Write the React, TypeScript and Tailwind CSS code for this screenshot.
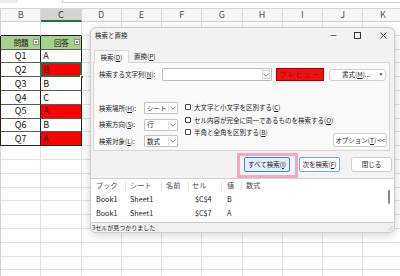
import clsx from "clsx";

const cols = ["B", "C", "D", "E", "F", "G", "H", "I", "J", "K"];

const answers = [
  { q: "Q1", a: "A", red: false },
  { q: "Q2", a: "B", red: true, active: true },
  { q: "Q3", a: "B", red: false },
  { q: "Q4", a: "C", red: false },
  { q: "Q5", a: "A", red: true },
  { q: "Q6", a: "B", red: false },
  { q: "Q7", a: "A", red: true },
];

const results = [
  { book: "Book1", sheet: "Sheet1", cell: "$C$4", value: "B" },
  { book: "Book1", sheet: "Sheet1", cell: "$C$7", value: "A" },
];

function Chevron() {
  return (
    <svg width="6" height="4" viewBox="0 0 6 4" className="shrink-0">
      <path d="M0.5 0.8 L3 3.2 L5.5 0.8" fill="none" stroke="#666" strokeWidth="0.8" />
    </svg>
  );
}

function FilterButton() {
  return (
    <div className="w-[6px] h-[6px] shrink-0 bg-white border border-[#8c8c8c] flex items-center justify-center">
      <svg width="4" height="3" viewBox="0 0 4 3">
        <path d="M0.5 0.5 L3.5 0.5 L2 2.5 Z" fill="#333" />
      </svg>
    </div>
  );
}

function Sheet() {
  const rowCount = 19;
  return (
    <div className="flex flex-col">
      <div className="flex h-[9px] bg-white border-b border-[#d6d6d6]">
        <div className="w-[18px] h-[3px] bg-[#ececec]" />
        <div className="ml-[44px] flex-1 h-[3px] bg-white border-b border-l border-[#cfcfcf] rounded-bl-[2px]" />
      </div>
      <div className="flex h-[13px]">
        <div className="w-px shrink-0 bg-[#f3f3f3] border-r border-[#d4d4d4]" />
        {cols.map((c) => (
          <div
            key={c}
            className={clsx(
              "w-[40.25px] shrink-0 flex items-center justify-center border-r border-[#dadada] text-[9px]",
              c === "C"
                ? "bg-[#d3d3d3] border-b-2 border-b-[#217346] text-[#333]"
                : "bg-[#f7f7f7] border-b border-b-[#d0d0d0] text-[#555]"
            )}
          >
            {c}
          </div>
        ))}
      </div>
      {Array.from({ length: rowCount }).map((_, r) => {
        const inTable = r >= 1 && r <= 8;
        const isHeader = r === 1;
        const data = r >= 2 && r <= 8 ? answers[r - 2] : null;
        const tableBottom =
          r === 0 || r === 8 ? "border-b-[#222]" : inTable ? "border-b-[#5a5a5a]" : "border-b-[#e1e1e1]";
        return (
          <div key={r} className="flex h-[13.8px]">
            <div className={clsx("w-px shrink-0 border-r", inTable ? "border-[#222]" : "border-[#d4d4d4]")} />
            {cols.map((c) => {
              const tableCol = c === "B" || c === "C";
              if (!tableCol) {
                return <div key={c} className="w-[40.25px] shrink-0 border-r border-b border-[#e1e1e1]" />;
              }
              const base = clsx(
                "w-[40.25px] shrink-0 border-r border-b relative flex items-center text-[9px] text-[#111]",
                inTable ? "border-r-[#222]" : "border-r-[#e1e1e1]",
                tableBottom
              );
              if (isHeader) {
                return (
                  <div key={c} className={clsx(base, "bg-[#a9d08e] pl-[8px] pr-px")}>
                    <span className="flex-1 text-center text-[7.5px]">{c === "B" ? "問題" : "回答"}</span>
                    <FilterButton />
                  </div>
                );
              }
              if (data && c === "B") {
                return (
                  <div key={c} className={clsx(base, "justify-center")}>
                    {data.q}
                  </div>
                );
              }
              if (data && c === "C") {
                return (
                  <div
                    key={c}
                    className={clsx(base, "pl-[2px]", data.red ? "bg-[#ff0000] text-[#9c0006]" : "bg-white")}
                  >
                    {data.a}
                    {data.active && (
                      <>
                        <div className="absolute -left-px -top-px -right-px -bottom-px border-2 border-[#217346]" />
                        <div className="absolute -right-[3px] -bottom-[3px] w-[4px] h-[4px] bg-[#217346] border border-white" />
                      </>
                    )}
                  </div>
                );
              }
              return <div key={c} className={base} />;
            })}
          </div>
        );
      })}
    </div>
  );
}

function Combo({ value }: { value: string }) {
  return (
    <div className="w-[34px] h-[12px] bg-white border border-[#c4c4c4] rounded-[1px] flex items-center pl-[2px] pr-px">
      <span className="flex-1 whitespace-nowrap">{value}</span>
      <div className="h-[8px] border-l border-[#e0e0e0] pl-px flex items-center">
        <Chevron />
      </div>
    </div>
  );
}

function Check({ label, mnemonic }: { label: string; mnemonic: string }) {
  return (
    <div className="h-[12.5px] flex items-center">
      <div className="w-[6px] h-[6px] border border-[#444] rounded-[1px] bg-white shrink-0" />
      <span className="ml-[3px] whitespace-nowrap">
        {label}(<span className="underline">{mnemonic}</span>)
      </span>
    </div>
  );
}

function FindDialog() {
  return (
    <div className="absolute left-[90px] top-[27px] w-[305px] h-[206px] rounded-[6px] bg-[#f3f3f3] border border-[#cdcdcd] shadow-[0_2px_10px_rgba(0,0,0,0.18)] flex flex-col overflow-hidden text-[6.5px] leading-none text-[#1b1b1b]">
      <div className="h-[21px] shrink-0 flex items-center pl-[4px] pb-[6px]">
        <span>検索と置換</span>
        <div className="ml-auto mr-[7px] flex items-center">
          <svg width="7" height="7" viewBox="0 0 7 7">
            <path d="M0.5 3.5 H6.5" stroke="#333" strokeWidth="0.7" />
          </svg>
          <svg width="7" height="7" viewBox="0 0 7 7" className="ml-[17px]">
            <rect x="0.5" y="0.5" width="6" height="6" fill="none" stroke="#222" strokeWidth="0.9" />
          </svg>
          <svg width="7" height="7" viewBox="0 0 7 7" className="ml-[19px]">
            <path d="M0.5 0.5 L6.5 6.5 M6.5 0.5 L0.5 6.5" stroke="#222" strokeWidth="0.8" />
          </svg>
        </div>
      </div>

      <div className="h-[13px] shrink-0 flex items-end pl-[3px]">
        <div className="relative w-[35px] h-[13px] bg-[#f9f9f9] border border-b-0 border-[#d6d6d6] rounded-t-[2px] flex items-center justify-center z-10 -mb-px">
          検索(<span className="underline">D</span>)
        </div>
        <div className="ml-[3px] h-[12px] px-[2px] flex items-center">
          置換(<span className="underline">P</span>)
        </div>
      </div>

      <div className="h-[89px] shrink-0 ml-[2px] mr-[4px] bg-[#f9f9f9] border border-[#d6d6d6] flex flex-col pl-[5px] pr-[2px]">
        <div className="mt-[5px] h-[13px] flex items-center">
          <span className="w-[63px] whitespace-nowrap">
            検索する文字列(<span className="underline">N</span>):
          </span>
          <div className="w-[110px] h-[13px] bg-white border border-[#bdbdbd] rounded-[1px] flex items-center justify-end pr-[1px]">
            <div className="w-[8px] h-[9px] border border-[#d2d2d2] flex items-center justify-center">
              <Chevron />
            </div>
          </div>
          <div className="ml-[4px] w-[48px] h-[13px] bg-[#ee1111] border border-[#a80000] flex items-center justify-center text-[#a00000] tracking-[1.6px]">
            プレビュー
          </div>
          <div className="ml-[5px] w-[57px] h-[12px] bg-white border border-[#cfcfcf] rounded-[3px] flex items-center pr-[2px]">
            <span className="flex-1 text-center pl-[3px]">
              書式(<span className="underline">M</span>)...
            </span>
            <svg width="4" height="3" viewBox="0 0 4 3">
              <path d="M0.3 0.5 L3.7 0.5 L2 2.6 Z" fill="#333" />
            </svg>
          </div>
        </div>

        <div className="mt-[21px] flex">
          <div className="grid grid-cols-[45px_34px] gap-y-[4.5px] items-center">
            <span className="whitespace-nowrap">
              検索場所(<span className="underline">H</span>):
            </span>
            <Combo value="シート" />
            <span className="whitespace-nowrap">
              検索方向(<span className="underline">S</span>):
            </span>
            <Combo value="行" />
            <span className="whitespace-nowrap">
              検索対象(<span className="underline">L</span>):
            </span>
            <Combo value="数式" />
          </div>
          <div className="ml-[7px] mt-[-1px] flex flex-col">
            <Check label="大文字と小文字を区別する" mnemonic="C" />
            <Check label="セル内容が完全に同一であるものを検索する" mnemonic="O" />
            <Check label="半角と全角を区別する" mnemonic="B" />
          </div>
          <div className="ml-auto self-end w-[58px] h-[14px] bg-white border border-[#cfcfcf] rounded-[3px] flex items-center justify-center whitespace-nowrap">
            オプション(<span className="underline">T</span>)&nbsp;&lt;&lt;
          </div>
        </div>
      </div>

      <div className="h-[27px] shrink-0 flex items-center justify-end pr-[2px]">
        <div className="relative w-[46px] h-[15px] bg-[#e3effa] border border-[#3c86d2] rounded-[2px] flex items-center justify-center">
          すべて検索(<span className="underline">I</span>)
          <div className="absolute -left-[8px] -right-[9px] -top-[5px] -bottom-[7px] border-[3px] border-[#f2a7c3]" />
        </div>
        <div className="ml-[9px] w-[41px] h-[15px] bg-[#fbfcfd] border border-[#7fa9d6] rounded-[2px] flex items-center justify-center">
          次を検索(<span className="underline">F</span>)
        </div>
        <div className="ml-[11px] w-[41px] h-[15px] bg-white border border-[#cfcfcf] rounded-[3px] flex items-center justify-center">
          閉じる
        </div>
      </div>

      <div className="relative h-[44px] shrink-0 bg-white border-t border-[#d2d2d2] text-[7.2px]">
        <div className="flex h-[14px] text-[#4a4a4a]">
          <div className="w-[35px] my-[2px] border-r border-[#e3e3e3] flex items-center pl-[5px]">ブック</div>
          <div className="w-[36px] my-[2px] border-r border-[#e3e3e3] flex items-center pl-[4px]">シート</div>
          <div className="w-[27px] my-[2px] border-r border-[#e3e3e3] flex items-center pl-[4px]">名前</div>
          <div className="w-[33px] my-[2px] border-r border-[#e3e3e3] flex items-center pl-[3px]">セル</div>
          <div className="w-[20px] my-[2px] border-r border-[#e3e3e3] flex items-center pl-[5px]">値</div>
          <div className="flex-1 my-[2px] flex items-center pl-[4px]">数式</div>
        </div>
        {results.map((r) => (
          <div key={r.cell} className="flex h-[14px] items-center text-[#222]">
            <div className="w-[35px] pl-[5px]">{r.book}</div>
            <div className="w-[36px] pl-[4px]">{r.sheet}</div>
            <div className="w-[27px]" />
            <div className="w-[33px] pl-[6px]">{r.cell}</div>
            <div className="w-[20px] pl-[5px]">{r.value}</div>
          </div>
        ))}
        <div className="absolute right-[4px] top-[11px] w-[2px] h-[14px] rounded-full bg-[#8a8a8a]" />
      </div>

      <div className="h-[10px] shrink-0 bg-[#f0f0f0] border-t border-[#cfcfcf] flex items-center pl-px text-[6px]">
        <span>3セルが見つかりました</span>
        <svg width="5" height="5" viewBox="0 0 5 5" className="ml-auto mr-[1px] self-end mb-[1px]">
          <circle cx="4" cy="1" r="0.5" fill="#999" />
          <circle cx="4" cy="4" r="0.5" fill="#999" />
          <circle cx="1" cy="4" r="0.5" fill="#999" />
          <circle cx="2.5" cy="2.5" r="0.5" fill="#999" />
        </svg>
      </div>
    </div>
  );
}

export default function App() {
  return (
    <div className="relative w-[400px] h-[276px] overflow-hidden bg-white font-['Noto_Sans_CJK_JP',sans-serif]">
      <Sheet />
      <FindDialog />
    </div>
  );
}
